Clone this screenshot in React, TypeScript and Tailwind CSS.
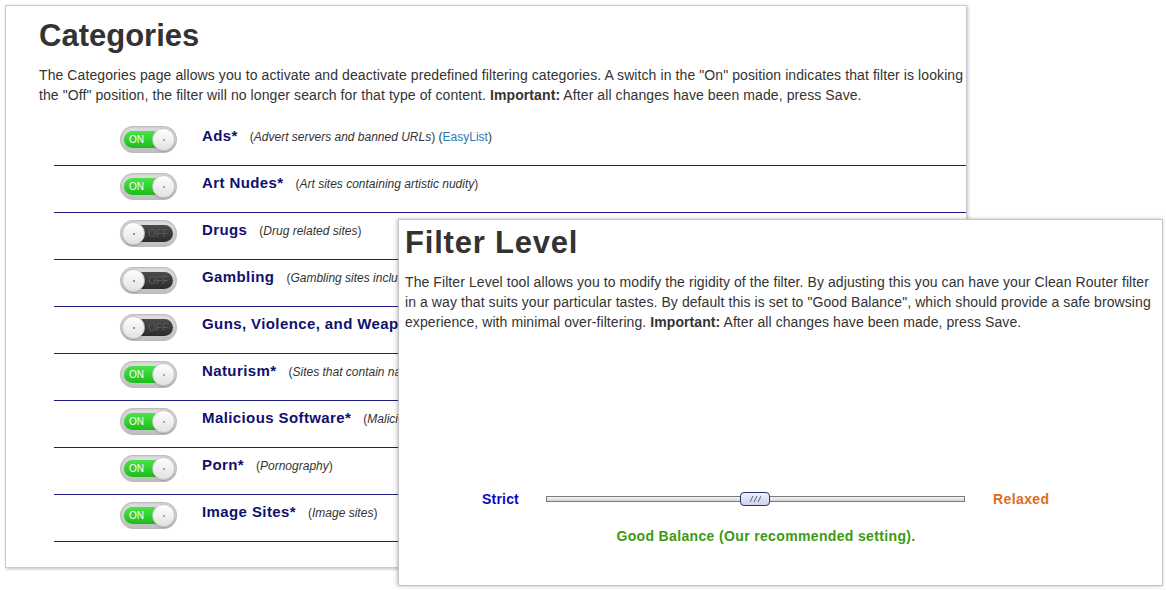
import React from 'react';

type Category = {
  name: string;
  on: boolean;
  desc: string;
  link?: string;
};

const categories: Category[] = [
  { name: 'Ads*', on: true, desc: 'Advert servers and banned URLs', link: 'EasyList' },
  { name: 'Art Nudes*', on: true, desc: 'Art sites containing artistic nudity' },
  { name: 'Drugs', on: false, desc: 'Drug related sites' },
  { name: 'Gambling', on: false, desc: 'Gambling sites including lotteries and casinos' },
  { name: 'Guns, Violence, and Weapons', on: false, desc: 'Sites containing weapons and violence' },
  { name: 'Naturism*', on: true, desc: 'Sites that contain naturist content' },
  { name: 'Malicious Software*', on: true, desc: 'Malicious software and phishing sites' },
  { name: 'Porn*', on: true, desc: 'Pornography' },
  { name: 'Image Sites*', on: true, desc: 'Image sites' },
];

const Toggle: React.FC<{ on: boolean }> = ({ on }) => {
  return (
    <div className="relative h-[27px] w-[57px] shrink-0 rounded-full bg-linear-to-b from-[#e0e0e0] to-[#bdbdbd] shadow-[inset_0_1px_2px_rgba(0,0,0,0.2)]">
      {on ? (
        <div className="absolute left-[4px] top-[5px] h-[17px] w-[38px] rounded-l-full bg-linear-to-b from-[#46e646] to-[#1cbc1c] pl-[5px] text-[10px] leading-[17px] text-white">
          ON
        </div>
      ) : (
        <div className="absolute right-[4px] top-[5px] h-[17px] w-[38px] rounded-r-full bg-linear-to-b from-[#4c4c4c] to-[#2c2c2c] pr-[5px] text-right text-[10px] leading-[17px] text-[#5c5c5c]">
          OFF
        </div>
      )}
      <div
        className={`absolute top-[2px] flex h-[23px] w-[23px] items-center justify-center rounded-full border border-[#c6c6c6] bg-linear-to-b from-white to-[#e2e2e2] shadow-[0_1px_1px_rgba(0,0,0,0.15)] ${on ? 'right-[2px]' : 'left-[2px]'}`}
      >
        <span className={`h-[2px] w-[2px] rounded-full ${on ? 'bg-[#3ccc3c]' : 'bg-[#777777]'}`} />
      </div>
    </div>
  );
};

const CategoriesPanel: React.FC = () => {
  return (
    <div className="absolute left-[5px] top-[5px] h-[563px] w-[962px] overflow-hidden border border-[#cbcbcb] bg-white pt-[11px] shadow-[1px_1px_3px_rgba(0,0,0,0.25)]">
      <h1 className="pl-[33px] text-[31px] font-bold leading-[37px] text-[#333333]">Categories</h1>
      <div className="mt-[11px] pl-[33px] text-[14px] leading-[20px] tracking-[0.09px] text-[#333333]">
        <p className="whitespace-nowrap">
          The Categories page allows you to activate and deactivate predefined filtering categories. A switch in the "On" position indicates that filter is looking
        </p>
        <p className="whitespace-nowrap">
          the "Off" position, the filter will no longer search for that type of content. <b>Important:</b> After all changes have been made, press Save.
        </p>
      </div>
      <div className="ml-[48px] mt-[14px]">
        {categories.map((c) => (
          <div key={c.name} className="flex h-[47px] items-start border-b border-[#1c1c84] pl-[66px] pt-[7px]">
            <Toggle on={c.on} />
            <div className="ml-[25px] flex items-baseline whitespace-nowrap">
              <span className="text-[15px] font-bold leading-[20px] tracking-[0.4px] text-[#10106e]">{c.name}</span>
              <span className="ml-[12px] text-[12px] text-[#333333]">
                (<i>{c.desc}</i>)
                {c.link && (
                  <>
                    {' '}(<span className="text-[#2a78b4]">{c.link}</span>)
                  </>
                )}
              </span>
            </div>
          </div>
        ))}
      </div>
    </div>
  );
};

const FilterLevelPanel: React.FC = () => {
  return (
    <div className="absolute left-[398px] top-[219px] h-[367px] w-[765px] border border-[#c4c4c4] bg-white pt-[4px] shadow-[-1px_0_4px_rgba(0,0,0,0.25)]">
      <h2 className="pl-[6px] text-[31px] font-bold leading-[37px] tracking-[0.8px] text-[#333333]">Filter Level</h2>
      <div className="mt-[11px] pl-[6px] text-[14px] leading-[20px] tracking-[0.08px] text-[#333333]">
        <p className="whitespace-nowrap">
          The Filter Level tool allows you to modify the rigidity of the filter. By adjusting this you can have your Clean Router filter
        </p>
        <p className="whitespace-nowrap">
          in a way that suits your particular tastes. By default this is set to "Good Balance", which should provide a safe browsing
        </p>
        <p className="whitespace-nowrap">
          experience, with minimal over-filtering. <b>Important:</b> After all changes have been made, press Save.
        </p>
      </div>
      <div className="ml-[83px] mt-[157px] w-[568px]">
        <div className="flex h-[20px] items-center">
          <span className="w-[64px] text-[14px] font-bold tracking-[0.2px] text-[#0a0ac8]">Strict</span>
          <div className="relative h-[6px] w-[419px] border border-[#7a7a7a] bg-linear-to-b from-[#f4f4f4] to-[#d4d4d4]">
            <div className="absolute left-[193px] top-[-5px] flex h-[14px] w-[30px] items-center justify-center rounded-[4px] border border-[#2a3470] bg-linear-to-b from-[#eef0fa] to-[#cfd3ea]">
              <svg width="12" height="6" viewBox="0 0 12 6">
                <path d="M1 6 L4 0 M5 6 L8 0 M9 6 L12 0" stroke="#5a6090" strokeWidth="1" fill="none" />
              </svg>
            </div>
          </div>
          <span className="ml-[28px] text-[14px] font-bold tracking-[0.4px] text-[#e36c1a]">Relaxed</span>
        </div>
        <p className="mt-[17px] text-center text-[14px] font-bold leading-[20px] tracking-[0.35px] text-[#3c9a14]">
          Good Balance (Our recommended setting).
        </p>
      </div>
    </div>
  );
};

export default function App() {
  return (
    <div className="relative h-[590px] w-[1166px] overflow-hidden bg-white font-['Liberation_Sans',Arial,sans-serif]">
      <CategoriesPanel />
      <FilterLevelPanel />
    </div>
  );
}
